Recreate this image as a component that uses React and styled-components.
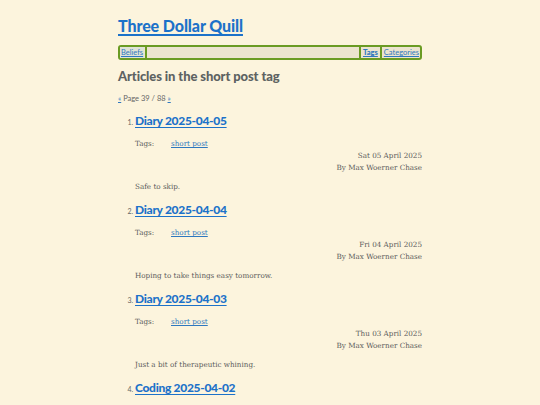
import React from "react";
import styled, { createGlobalStyle } from "styled-components";

const GlobalStyle = createGlobalStyle`
  html, body {
    margin: 0;
    padding: 0;
    background: #fcf4dd;
  }
  body {
    font-family: "DejaVu Serif", "Liberation Serif", serif;
    color: #5a5a5a;
  }
`;

const Page = styled.div`
  width: 304px;
  margin: 0 auto;
  padding-top: 16px;
`;

const SiteTitle = styled.h1`
  margin: 0;
  font-family: "Lato", "Noto Sans", sans-serif;
  font-size: 16px;
  line-height: 20px;
  font-weight: 900;
  letter-spacing: -0.1px;

  a {
    color: #1c72c9;
    text-decoration: underline;
    text-decoration-thickness: 1.5px;
    text-underline-offset: 2px;
  }
`;

const Nav = styled.nav`
  margin-top: 9px;
  height: 11px;
  display: flex;
  align-items: stretch;
  border: 2px solid #6a9b23;
  border-radius: 3px;
  background: #ece4cf;
  font-family: "Lato", "Noto Sans", sans-serif;
  font-size: 7.5px;
  line-height: 11px;
`;

const NavLink = styled.a`
  padding: 0 1px;
  color: #2f78bf;
  font-weight: ${(p) => (p.$bold ? 900 : 400)};
  background: ${(p) => (p.$active ? "#dfe3d6" : "transparent")};
  text-decoration: underline;
`;

const Sep = styled.span`
  width: 2px;
  margin: 0 1px;
  background: #6a9b23;
`;

const Spacer = styled.span`
  flex: 1;
`;

const Heading = styled.h2`
  margin: 8px 0 0;
  font-family: "Lato", "Noto Sans", sans-serif;
  font-size: 13px;
  line-height: 16px;
  font-weight: 900;
  color: #5d6262;
  letter-spacing: -0.1px;
`;

const Pager = styled.p`
  margin: 10px 0 0;
  font-family: "Lato", "Noto Sans", sans-serif;
  font-size: 7.5px;
  line-height: 10px;
  color: #666;

  a {
    color: #2f78bf;
  }
`;

const List = styled.ol`
  margin: 9px 0 0;
  padding-left: 17px;

  li::marker {
    font-family: "Lato", "Noto Sans", sans-serif;
    font-size: 7px;
    color: #666;
  }
`;

const Item = styled.li`
  margin-bottom: 9px;
`;

const ItemTitle = styled.h3`
  margin: 0;
  font-family: "Lato", "Noto Sans", sans-serif;
  font-size: 12px;
  line-height: 16px;
  font-weight: 900;
  letter-spacing: -0.3px;

  a {
    color: #1c72c9;
    text-decoration: underline;
    text-decoration-thickness: 1.2px;
    text-underline-offset: 1.5px;
  }
`;

const Tags = styled.div`
  margin-top: 9px;
  display: flex;
  font-size: 7.2px;
  line-height: 12px;
`;

const TagLabel = styled.span`
  width: 36px;
`;

const TagLink = styled.a`
  color: #2f78bf;
  text-decoration: underline;
`;

const Byline = styled.div`
  text-align: right;
  font-size: 7.2px;
  line-height: 12px;
`;

const Summary = styled.p`
  margin: 7px 0 0;
  font-size: 7.2px;
  line-height: 12px;
`;

const posts = [
  { title: "Diary 2025-04-05", date: "Sat 05 April 2025", summary: "Safe to skip." },
  { title: "Diary 2025-04-04", date: "Fri 04 April 2025", summary: "Hoping to take things easy tomorrow." },
  { title: "Diary 2025-04-03", date: "Thu 03 April 2025", summary: "Just a bit of therapeutic whining." },
  { title: "Coding 2025-04-02", date: "Wed 02 April 2025", summary: "Not much to report." },
];

export default function App() {
  return (
    <>
      <GlobalStyle />
      <Page>
        <SiteTitle>
          <a href="#">Three Dollar Quill</a>
        </SiteTitle>
        <Nav>
          <NavLink href="#" $active>Beliefs</NavLink>
          <Sep />
          <Spacer />
          <Sep />
          <NavLink href="#" $bold>Tags</NavLink>
          <Sep />
          <NavLink href="#">Categories</NavLink>
        </Nav>
        <Heading>Articles in the short post tag</Heading>
        <Pager>
          <a href="#">«</a> Page 39 / 88 <a href="#">»</a>
        </Pager>
        <List>
          {posts.map((post) => (
            <Item key={post.title}>
              <ItemTitle>
                <a href="#">{post.title}</a>
              </ItemTitle>
              <Tags>
                <TagLabel>Tags:</TagLabel>
                <TagLink href="#">short post</TagLink>
              </Tags>
              <Byline>
                <div>{post.date}</div>
                <div>By Max Woerner Chase</div>
              </Byline>
              <Summary>{post.summary}</Summary>
            </Item>
          ))}
        </List>
      </Page>
    </>
  );
}
